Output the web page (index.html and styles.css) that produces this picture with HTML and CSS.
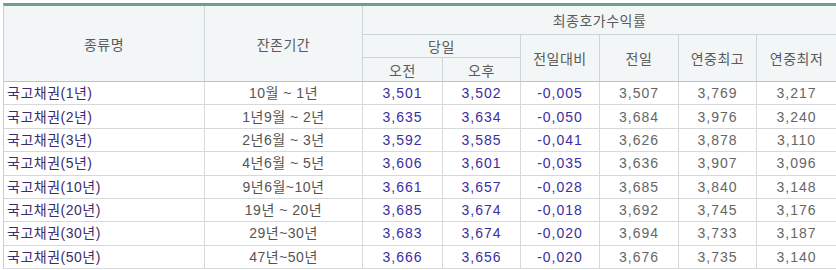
FILE: index.html
```html
<!DOCTYPE html>
<html lang="ko">
<head>
<meta charset="utf-8">
<title>최종호가수익률</title>
<link rel="stylesheet" href="styles.css">
</head>
<body>
<table class="yield">
  <colgroup>
    <col class="c-name"><col class="c-term"><col class="c-am"><col class="c-pm">
    <col class="c-diff"><col class="c-prev"><col class="c-high"><col class="c-low">
  </colgroup>
  <thead>
    <tr class="h1">
      <th rowspan="3">종류명</th>
      <th rowspan="3">잔존기간</th>
      <th colspan="6">최종호가수익률</th>
    </tr>
    <tr class="h2">
      <th colspan="2">당일</th>
      <th rowspan="2">전일대비</th>
      <th rowspan="2">전일</th>
      <th rowspan="2">연중최고</th>
      <th rowspan="2">연중최저</th>
    </tr>
    <tr class="h3">
      <th>오전</th>
      <th>오후</th>
    </tr>
  </thead>
  <tbody>
    <tr><td class="name">국고채권(1년)</td><td class="term">10월 ~ 1년</td><td class="num blue">3,501</td><td class="num blue">3,502</td><td class="num blue">-0,005</td><td class="num">3,507</td><td class="num">3,769</td><td class="num">3,217</td></tr>
    <tr><td class="name">국고채권(2년)</td><td class="term">1년9월 ~ 2년</td><td class="num blue">3,635</td><td class="num blue">3,634</td><td class="num blue">-0,050</td><td class="num">3,684</td><td class="num">3,976</td><td class="num">3,240</td></tr>
    <tr><td class="name">국고채권(3년)</td><td class="term">2년6월 ~ 3년</td><td class="num blue">3,592</td><td class="num blue">3,585</td><td class="num blue">-0,041</td><td class="num">3,626</td><td class="num">3,878</td><td class="num">3,110</td></tr>
    <tr><td class="name">국고채권(5년)</td><td class="term">4년6월 ~ 5년</td><td class="num blue">3,606</td><td class="num blue">3,601</td><td class="num blue">-0,035</td><td class="num">3,636</td><td class="num">3,907</td><td class="num">3,096</td></tr>
    <tr><td class="name">국고채권(10년)</td><td class="term">9년6월~10년</td><td class="num blue">3,661</td><td class="num blue">3,657</td><td class="num blue">-0,028</td><td class="num">3,685</td><td class="num">3,840</td><td class="num">3,148</td></tr>
    <tr><td class="name">국고채권(20년)</td><td class="term">19년 ~ 20년</td><td class="num blue">3,685</td><td class="num blue">3,674</td><td class="num blue">-0,018</td><td class="num">3,692</td><td class="num">3,745</td><td class="num">3,176</td></tr>
    <tr><td class="name">국고채권(30년)</td><td class="term">29년~30년</td><td class="num blue">3,683</td><td class="num blue">3,674</td><td class="num blue">-0,020</td><td class="num">3,694</td><td class="num">3,733</td><td class="num">3,187</td></tr>
    <tr><td class="name">국고채권(50년)</td><td class="term">47년~50년</td><td class="num blue">3,666</td><td class="num blue">3,656</td><td class="num blue">-0,020</td><td class="num">3,676</td><td class="num">3,735</td><td class="num">3,140</td></tr>
  </tbody>
</table>
</body>
</html>
```

FILE: styles.css
```css
html, body {
  margin: 0;
  padding: 0;
  background: #ffffff;
}
body {
  padding: 3px 0 0 3px;
  font-family: "Liberation Sans", "Noto Sans CJK KR", sans-serif;
  font-size: 14px;
  color: #555555;
}
.yield {
  border-collapse: separate;
  border-spacing: 0;
  table-layout: fixed;
  width: 834px;
  border-top: 3px solid #6f9e8d;
  border-left: 1px solid #cbcfd2;
}
.c-name { width: 201px; }
.c-term { width: 158px; }
.c-am { width: 80px; }
.c-pm { width: 78px; }
.c-diff { width: 79px; }
.c-prev { width: 79px; }
.c-high { width: 78px; }
.c-low { width: 80px; }

.yield th,
.yield td {
  padding: 0;
  border-right: 1px solid #d6d8da;
  border-bottom: 1px solid #d6d8da;
  text-align: center;
  vertical-align: middle;
  white-space: nowrap;
  line-height: 16px;
  letter-spacing: 0.5px;
}
.yield th {
  background: #f2f6f7;
  font-weight: normal;
  color: #5a5a5a;
  border-right-color: #cdd5d9;
  border-bottom-color: #cdd5d9;
  font-family: "Noto Sans CJK KR", sans-serif;
}
.yield thead tr.h1 { height: 29px; }
.yield thead tr.h2 { height: 23px; }
.yield thead tr.h3 { height: 24px; }
.yield thead tr.h3 th,
.yield thead tr.h1 th[rowspan="3"],
.yield thead tr.h2 th[rowspan="2"] {
  border-bottom-color: #b9c3ca;
}
.yield tbody tr { height: 23.375px; }
.yield td.name {
  text-align: left;
  padding-left: 3px;
  color: #3b2d6e;
}
.yield td.term { color: #555555; }
.yield td.num {
  color: #666666;
  letter-spacing: 1px;
}
.yield td.blue { color: #3a2ea3; }
```
